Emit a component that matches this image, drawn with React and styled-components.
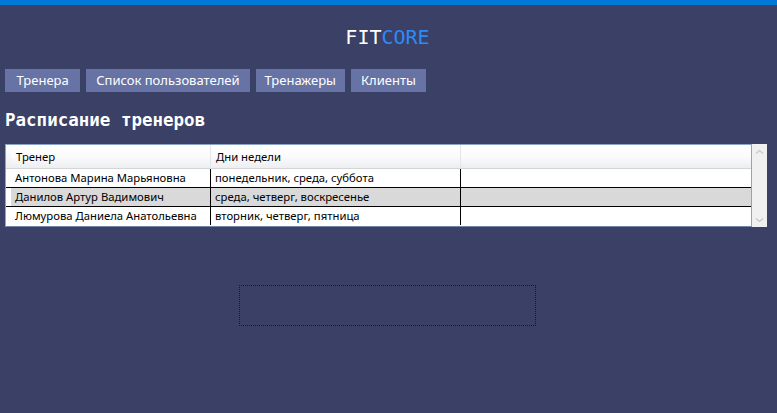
import React from "react";
import styled, { createGlobalStyle } from "styled-components";

const trainers = [
  { name: "Антонова Марина Марьяновна", days: "понедельник, среда, суббота" },
  { name: "Данилов Артур Вадимович", days: "среда, четверг, воскресенье" },
  { name: "Люмурова Даниела Анатольевна", days: "вторник, четверг, пятница" },
];

const tabs = [
  { label: "Тренера", pad: 11.5 },
  { label: "Список пользователей", pad: 10 },
  { label: "Тренажеры", pad: 9 },
  { label: "Клиенты", pad: 10 },
];

const GlobalStyle = createGlobalStyle`
  html, body {
    margin: 0;
    padding: 0;
    background: #3a4066;
  }
  #root {
    height: 413px;
  }
`;

const Page = styled.div`
  width: 777px;
  height: 413px;
  background: #3a4066;
  display: flex;
  flex-direction: column;
  overflow: hidden;
`;

const TopBar = styled.div`
  height: 5px;
  background: #0078d7;
`;

const Logo = styled.div`
  margin-top: 21px;
  height: 22px;
  text-align: center;
  font-family: "DejaVu Sans Mono", "Liberation Mono", monospace;
  font-size: 20px;
  line-height: 22px;
  padding-right: 2px;
`;

const LogoPart = styled.span`
  color: ${(p) => (p.$accent ? "#2f8af5" : "#ffffff")};
`;

const Nav = styled.nav`
  display: flex;
  gap: 6px;
  margin-top: 21px;
  padding-left: 5px;
`;

const Tab = styled.button`
  height: 23px;
  padding: 0 ${(p) => p.$pad}px;
  border: none;
  background: #6773a5;
  color: #ffffff;
  font-family: "Noto Sans", "Open Sans", sans-serif;
  font-size: 13px;
  line-height: 23px;
  cursor: pointer;
`;

const Heading = styled.h2`
  margin: 18px 0 0 5px;
  height: 20px;
  font-family: "DejaVu Sans Mono", "Liberation Mono", monospace;
  font-weight: bold;
  font-size: 17.5px;
  line-height: 20px;
  color: #ffffff;
  white-space: pre;
`;

const GridBox = styled.div`
  margin: 14px 0 0 5px;
  width: 762px;
  height: 83px;
  display: flex;
  background: #ffffff;
`;

const TableArea = styled.div`
  flex: 1;
  border: 1px solid #8aa5c8;
  border-bottom-color: #6f86a8;
  display: grid;
  grid-template-columns: 5px 200px 250px 1fr;
  grid-auto-rows: min-content;
  font-family: "Noto Sans", "Open Sans", sans-serif;
  font-size: 11.3px;
  color: #000000;
  overflow: hidden;
`;

const HeadCell = styled.div`
  height: 23px;
  line-height: 23px;
  padding-left: 5px;
  background: linear-gradient(#ffffff 0%, #fbfbfc 50%, #eceef1 100%);
  border-right: ${(p) => (p.$last ? "none" : "1px solid #e3e5e8")};
  border-bottom: 1px solid #d5d5d5;
`;

const Cell = styled.div`
  height: 18px;
  line-height: 18px;
  padding-left: 4px;
  background: ${(p) => (p.$alt ? "#d9d9d9" : "#ffffff")};
  border-right: ${(p) => (p.$last ? "none" : "1px solid #000000")};
  border-bottom: ${(p) => (p.$end ? "none" : "1px solid #000000")};
  white-space: nowrap;
  overflow: hidden;
`;

const RowHead = styled.div`
  height: ${(p) => (p.$head ? 23 : 18)}px;
  background: ${(p) => (p.$head ? "linear-gradient(#ffffff, #eceef1)" : "#ffffff")};
  border-bottom: ${(p) =>
    p.$head ? "1px solid #d5d5d5" : p.$end ? "none" : "1px solid #000000"};
`;

const Scrollbar = styled.div`
  width: 15px;
  background: #f0f0f0;
  display: flex;
  flex-direction: column;
  justify-content: space-between;
  align-items: center;
  padding: 5px 0 4px;
`;

const Arrow = ({ down }) => (
  <svg width="9" height="6" viewBox="0 0 9 6">
    <path
      d={down ? "M1 1.5 L4.5 4.5 L8 1.5" : "M1 4.5 L4.5 1.5 L8 4.5"}
      fill="none"
      stroke="#c8c8c8"
      strokeWidth="1.2"
    />
  </svg>
);

const FocusBox = styled.div`
  margin: 58px 0 0 239px;
  width: 295px;
  height: 39px;
  border: 1px dotted #15182b;
`;

export default function App() {
  return (
    <Page>
      <GlobalStyle />
      <TopBar />
      <Logo>
        <LogoPart>FIT</LogoPart>
        <LogoPart $accent>CORE</LogoPart>
      </Logo>
      <Nav>
        {tabs.map((t) => (
          <Tab key={t.label} $pad={t.pad}>
            {t.label}
          </Tab>
        ))}
      </Nav>
      <Heading>Расписание тренеров</Heading>
      <GridBox>
        <TableArea>
          <RowHead $head />
          <HeadCell>Тренер</HeadCell>
          <HeadCell>Дни недели</HeadCell>
          <HeadCell $last />
          {trainers.map((t, i) => {
            const end = i === trainers.length - 1;
            const alt = i === 1;
            return (
              <React.Fragment key={t.name}>
                <RowHead $end={end} />
                <Cell $alt={alt} $end={end}>
                  {t.name}
                </Cell>
                <Cell $alt={alt} $end={end}>
                  {t.days}
                </Cell>
                <Cell $alt={alt} $end={end} $last />
              </React.Fragment>
            );
          })}
        </TableArea>
        <Scrollbar>
          <Arrow />
          <Arrow down />
        </Scrollbar>
      </GridBox>
      <FocusBox />
    </Page>
  );
}
